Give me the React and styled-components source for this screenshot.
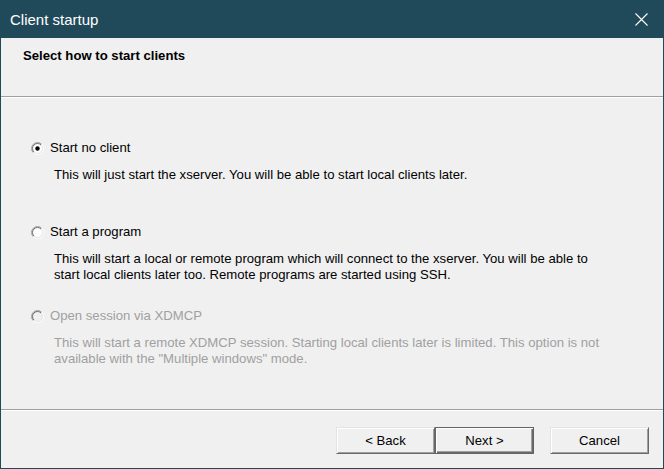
import React from "react";
import styled, { createGlobalStyle } from "styled-components";

const Global = createGlobalStyle`
  html, body { margin: 0; padding: 0; background: #f0f0f0; }
  body { font-family: "Liberation Sans", Arial, sans-serif; }
  * { box-sizing: border-box; }
`;

const TEAL = "#204a5a";

const Window = styled.div`
  width: 664px;
  height: 469px;
  display: flex;
  flex-direction: column;
  background: #f0f0f0;
  border-left: 1px solid ${TEAL};
  border-right: 1px solid ${TEAL};
  border-bottom: 1px solid ${TEAL};
  font-size: 13.15px;
  line-height: 16px;
  color: #000;
`;

const TitleBar = styled.div`
  height: 38px;
  margin: 0 -1px;
  background: ${TEAL};
  display: flex;
  align-items: center;
  justify-content: space-between;
  padding: 0 16px 0 10px;
  color: #fff;
  font-size: 15px;
  flex-shrink: 0;
`;

const Title = styled.span`
  line-height: 20px;
  padding-top: 1px;
`;

const Header = styled.div`
  height: 58px;
  padding: 10px 0 0 22px;
  font-weight: bold;
  flex-shrink: 0;
`;

const Separator = styled.div`
  height: 2px;
  border-top: 1px solid #a0a0a0;
  border-bottom: 1px solid #ffffff;
  flex-shrink: 0;
`;

const Options = styled.div`
  padding: 42px 0 0 30px;
  display: grid;
  grid-template-rows: repeat(3, 84px);
  flex: 1;
`;

const Option = styled.div`
  display: flex;
  flex-direction: column;
  color: ${(p) => (p.$disabled ? "#a0a0a0" : "#000")};
`;

const RadioRow = styled.div`
  display: flex;
  align-items: center;
  gap: 6px;
  height: 16px;
`;

const Desc = styled.div`
  margin-top: 10.5px;
  padding-left: 23px;
  white-space: nowrap;
`;

const Footer = styled.div`
  display: flex;
  align-items: flex-start;
  height: 57px;
  padding: 16px 14px 0 0;
  justify-content: flex-end;
  flex-shrink: 0;
`;

const ButtonGroup = styled.div`
  display: flex;
  margin-right: ${(p) => p.$gap || 0}px;
`;

const Button = styled.button`
  width: 99px;
  height: 27px;
  padding: 0;
  margin: 0;
  font-family: "Liberation Sans", Arial, sans-serif;
  font-size: 13.15px;
  color: #000;
  background: #f0f0f0;
  border-style: solid;
  border-width: 1px;
  border-color: #e3e3e3 #696969 #696969 #e3e3e3;
  box-shadow: inset 1px 1px 0 #ffffff, inset -1px -1px 0 #a0a0a0;
  outline: none;
  ${(p) =>
    p.$default &&
    `
    border-color: #646464;
    box-shadow: inset 1px 1px 0 #ffffff, inset -1px -1px 0 #696969, inset -2px -2px 0 #a0a0a0;
  `}
`;

const Radio = ({ checked, disabled }) => {
  const c = 6.5;
  const arc = (r) => {
    const d = r / Math.SQRT2;
    return {
      tl: `M ${c - d} ${c + d} A ${r} ${r} 0 0 1 ${c + d} ${c - d}`,
      br: `M ${c + d} ${c - d} A ${r} ${r} 0 0 1 ${c - d} ${c + d}`,
    };
  };
  const o = arc(6);
  const i = arc(5);
  return (
    <svg width="13" height="13" viewBox="0 0 13 13">
      <circle cx={c} cy={c} r="5" fill={disabled ? "#f0f0f0" : "#ffffff"} />
      <path d={o.tl} stroke="#a0a0a0" fill="none" />
      <path d={o.br} stroke="#ffffff" fill="none" />
      <path d={i.tl} stroke="#696969" fill="none" />
      <path d={i.br} stroke="#e3e3e3" fill="none" />
      {checked && <circle cx={c} cy={c} r="2.2" fill="#000" />}
    </svg>
  );
};

const CloseIcon = () => (
  <svg width="13" height="13" viewBox="0 0 13 13">
    <path d="M0.5 0.5 L12.5 12.5 M12.5 0.5 L0.5 12.5" stroke="#fff" strokeWidth="1.1" />
  </svg>
);

const options = [
  {
    label: "Start no client",
    checked: true,
    lines: ["This will just start the xserver. You will be able to start local clients later."],
  },
  {
    label: "Start a program",
    lines: [
      "This will start a local or remote program which will connect to the xserver. You will be able to",
      "start local clients later too. Remote programs are started using SSH.",
    ],
  },
  {
    label: "Open session via XDMCP",
    disabled: true,
    lines: [
      "This will start a remote XDMCP session. Starting local clients later is limited. This option is not",
      "available with the \"Multiple windows\" mode.",
    ],
  },
];

export default function App() {
  return (
    <>
      <Global />
      <Window>
        <TitleBar>
          <Title>Client startup</Title>
          <CloseIcon />
        </TitleBar>
        <Header>Select how to start clients</Header>
        <Separator />
        <Options>
          {options.map((o) => (
            <Option key={o.label} $disabled={o.disabled}>
              <RadioRow>
                <Radio checked={o.checked} disabled={o.disabled} />
                <span>{o.label}</span>
              </RadioRow>
              <Desc>
                {o.lines.map((l, idx) => (
                  <div key={idx}>{l}</div>
                ))}
              </Desc>
            </Option>
          ))}
        </Options>
        <Separator />
        <Footer>
          <ButtonGroup $gap={16}>
            <Button>&lt; Back</Button>
            <Button $default>Next &gt;</Button>
          </ButtonGroup>
          <Button>Cancel</Button>
        </Footer>
      </Window>
    </>
  );
}
